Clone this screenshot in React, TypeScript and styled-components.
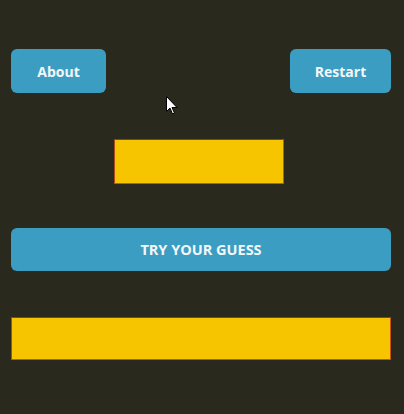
import React from "react";
import styled, { createGlobalStyle } from "styled-components";

const Global = createGlobalStyle`
  html, body { margin: 0; padding: 0; background: #29291d; }
  body { font-family: "Open Sans", "Noto Sans", sans-serif; }
`;

const Page = styled.div`
  position: relative;
  width: 404px;
  height: 414px;
  box-sizing: border-box;
  padding: 49px 13px 0 11px;
  display: flex;
  flex-direction: column;
  background: #29291d;
`;

const TopRow = styled.div`
  display: flex;
  justify-content: space-between;
  align-items: center;
`;

const Button = styled.button<{ $wide?: boolean; $w?: number }>`
  width: ${(p) => (p.$wide ? "100%" : `${p.$w ?? 95}px`)};
  height: ${(p) => (p.$wide ? 43 : 44)}px;
  border: none;
  border-radius: 6px;
  background: #3c9dc2;
  color: #f4f7f8;
  font-family: "Open Sans", "Noto Sans", sans-serif;
  font-weight: 700;
  font-size: ${(p) => (p.$wide ? 14.5 : 14)}px;
  padding: 0;
  display: flex;
  align-items: center;
  justify-content: center;
  cursor: pointer;
`;

const Field = styled.div<{ $full?: boolean; $mt: number; $h: number; $shift?: number }>`
  box-sizing: border-box;
  margin-top: ${(p) => p.$mt}px;
  margin-left: ${(p) => p.$shift ?? 0}px;
  width: ${(p) => (p.$full ? "100%" : "170px")};
  height: ${(p) => p.$h}px;
  align-self: ${(p) => (p.$full ? "stretch" : "center")};
  background: #f6c500;
  border: 1px solid #c4561c;
  border-top-color: #9c3a18;
  border-left-color: #b04a1a;
`;

const Spacer = styled.div<{ $h: number }>`
  height: ${(p) => p.$h}px;
`;

const Cursor = styled.svg`
  position: absolute;
  left: 166px;
  top: 96px;
  width: 12px;
  height: 19px;
`;

export default function App() {
  return (
    <>
      <Global />
      <Page>
        <TopRow>
          <Button>About</Button>
          <Button $w={101}>Restart</Button>
        </TopRow>
        <Field $mt={46} $h={45} $shift={-5} />
        <Spacer $h={44} />
        <Button $wide>TRY YOUR GUESS</Button>
        <Field $full $mt={46} $h={43} />
        <Cursor viewBox="0 0 12 19">
          <path
            d="M0.5 0.5 L0.5 15.5 L4 12 L6.5 18 L8.5 17 L6 11.5 L11 11.5 Z"
            fill="#ffffff"
            stroke="#000000"
            strokeWidth="1"
            strokeLinejoin="round"
          />
        </Cursor>
      </Page>
    </>
  );
}
